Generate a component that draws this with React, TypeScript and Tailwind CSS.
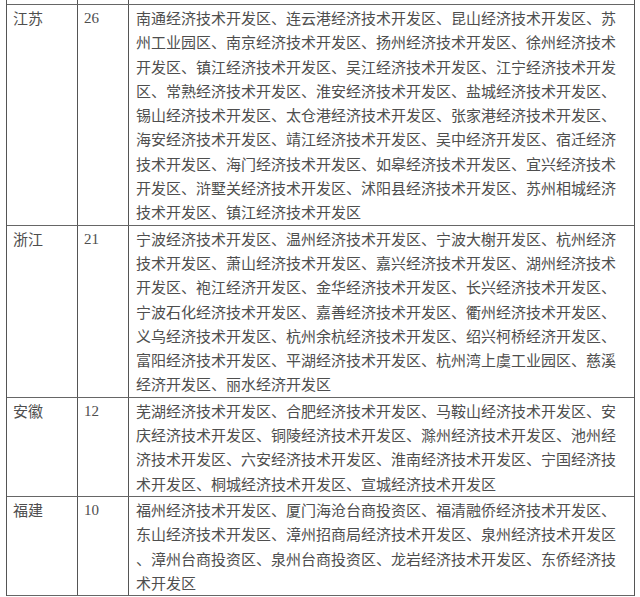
const rows: { prov: string; count: string; lines: string[] }[] = [
  {
    prov: '江苏',
    count: '26',
    lines: [
      '南通经济技术开发区、连云港经济技术开发区、昆山经济技术开发区、苏',
      '州工业园区、南京经济技术开发区、扬州经济技术开发区、徐州经济技术',
      '开发区、镇江经济技术开发区、吴江经济技术开发区、江宁经济技术开发',
      '区、常熟经济技术开发区、淮安经济技术开发区、盐城经济技术开发区、',
      '锡山经济技术开发区、太仓港经济技术开发区、张家港经济技术开发区、',
      '海安经济技术开发区、靖江经济技术开发区、吴中经济开发区、宿迁经济',
      '技术开发区、海门经济技术开发区、如皋经济技术开发区、宜兴经济技术',
      '开发区、浒墅关经济技术开发区、沭阳县经济技术开发区、苏州相城经济',
      '技术开发区、镇江经济技术开发区',
    ],
  },
  {
    prov: '浙江',
    count: '21',
    lines: [
      '宁波经济技术开发区、温州经济技术开发区、宁波大榭开发区、杭州经济',
      '技术开发区、萧山经济技术开发区、嘉兴经济技术开发区、湖州经济技术',
      '开发区、袍江经济开发区、金华经济技术开发区、长兴经济技术开发区、',
      '宁波石化经济技术开发区、嘉善经济技术开发区、衢州经济技术开发区、',
      '义乌经济技术开发区、杭州余杭经济技术开发区、绍兴柯桥经济开发区、',
      '富阳经济技术开发区、平湖经济技术开发区、杭州湾上虞工业园区、慈溪',
      '经济开发区、丽水经济开发区',
    ],
  },
  {
    prov: '安徽',
    count: '12',
    lines: [
      '芜湖经济技术开发区、合肥经济技术开发区、马鞍山经济技术开发区、安',
      '庆经济技术开发区、铜陵经济技术开发区、滁州经济技术开发区、池州经',
      '济技术开发区、六安经济技术开发区、淮南经济技术开发区、宁国经济技',
      '术开发区、桐城经济技术开发区、宣城经济技术开发区',
    ],
  },
  {
    prov: '福建',
    count: '10',
    lines: [
      '福州经济技术开发区、厦门海沧台商投资区、福清融侨经济技术开发区、',
      '东山经济技术开发区、漳州招商局经济技术开发区、泉州经济技术开发区',
      '、漳州台商投资区、泉州台商投资区、龙岩经济技术开发区、东侨经济技',
      '术开发区',
    ],
  },
]

export default function App() {
  return (
    <div className="w-[640px] h-[597px] overflow-hidden bg-white text-[15px] text-[#4e4e4e] font-['Noto_Sans_CJK_SC',sans-serif]">
      <div className="ml-[6px] w-[629px] border-x border-[#555]">
        {/* 上一行被截掉的尾巴 */}
        <div className="flex h-[5px] border-b border-[#666]">
          <div className="w-[71px] border-r border-[#555]" />
          <div className="w-[51px] border-r border-[#555]" />
          <div className="flex-1" />
        </div>
        {rows.map((r) => (
          <div key={r.prov} className="flex border-b border-[#666] leading-[24.3px]">
            <div className="w-[71px] shrink-0 border-r border-[#555] pl-[6px] pt-px">{r.prov}</div>
            <div className="w-[51px] shrink-0 border-r border-[#555] pl-[6px] pt-px font-['Liberation_Serif',serif]">
              {r.count}
            </div>
            <div className="flex-1 pl-[7px] pt-px">
              {r.lines.map((l, i) => (
                <div key={i} className="whitespace-nowrap">
                  {l}
                </div>
              ))}
            </div>
          </div>
        ))}
      </div>
    </div>
  )
}
